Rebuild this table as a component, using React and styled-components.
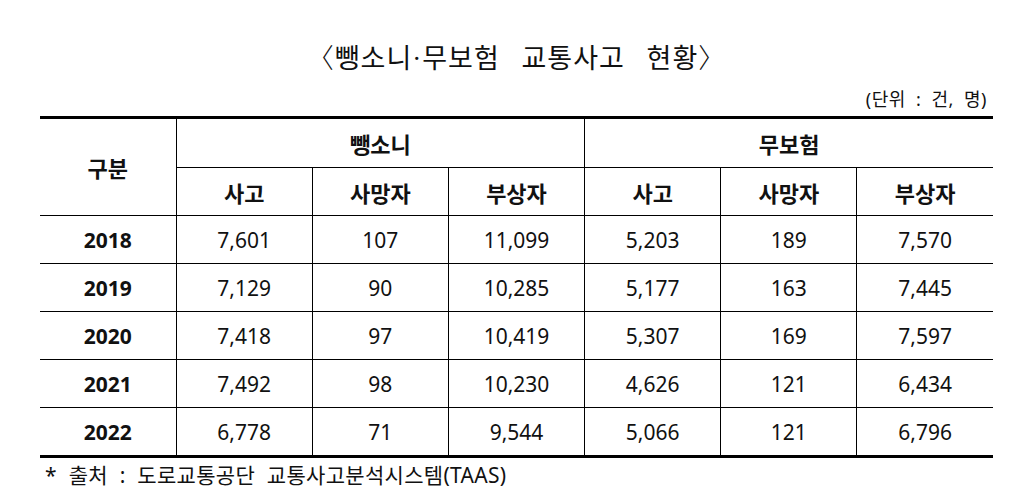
import React from "react";
import styled, { createGlobalStyle } from "styled-components";

const Global = createGlobalStyle`
  html, body { margin: 0; padding: 0; background: #fff; }
  body { font-family: "Noto Sans", "Noto Sans CJK KR", sans-serif; color: #111; }
`;

const Page = styled.div`
  width: 1033px;
  height: 501px;
  display: flex;
  flex-direction: column;
  padding: 40px 40px 0 40px;
  box-sizing: border-box;
`;

const Title = styled.h1`
  margin: 0;
  margin-left: -40px;
  margin-right: -40px;
  text-align: center;
  font-family: "Liberation Serif", "Noto Sans CJK KR", serif;
  font-weight: 400;
  font-size: 27px;
  line-height: 34px;
  letter-spacing: 1px;
  word-spacing: 14px;
`;

const Bracket = styled.span`
  font-family: "Noto Sans CJK KR", sans-serif;
  font-weight: 300;
`;

const Unit = styled.div`
  text-align: right;
  font-size: 18px;
  line-height: 22px;
  margin-top: 12px;
  padding-right: 6px;
  word-spacing: 5px;
  letter-spacing: 0.5px;
`;

const Table = styled.table`
  margin-top: 6px;
  width: 953px;
  border-collapse: collapse;
  table-layout: fixed;
  border-top: 3px solid #000;
  border-bottom: 3px solid #000;
`;

const Cell = styled.td`
  border: 1px solid #000;
  text-align: center;
  vertical-align: middle;
  padding: 0;
  height: ${(p) => p.$h || 47}px;
  font-size: ${(p) => (p.$head ? 22 : 21)}px;
  font-weight: ${(p) => (p.$bold ? 700 : 400)};
  &:first-child { border-left: none; }
  &:last-child { border-right: none; }
`;

const Footer = styled.div`
  margin-top: 4px;
  padding-left: 5px;
  font-size: 21px;
  line-height: 26px;
  word-spacing: 6px;
  letter-spacing: 0.3px;
`;

const data = [
  ["2018", "7,601", "107", "11,099", "5,203", "189", "7,570"],
  ["2019", "7,129", "90", "10,285", "5,177", "163", "7,445"],
  ["2020", "7,418", "97", "10,419", "5,307", "169", "7,597"],
  ["2021", "7,492", "98", "10,230", "4,626", "121", "6,434"],
  ["2022", "6,778", "71", "9,544", "5,066", "121", "6,796"],
];

const subs = ["사고", "사망자", "부상자", "사고", "사망자", "부상자"];

export default function App() {
  return (
    <>
      <Global />
      <Page>
        <Title>
          <Bracket>〈</Bracket>뺑소니·무보험 교통사고 현황<Bracket>〉</Bracket>
        </Title>
        <Unit>(단위 : 건, 명)</Unit>
        <Table>
          <colgroup>
            {Array.from({ length: 7 }).map((_, i) => (
              <col key={i} style={{ width: 136 }} />
            ))}
          </colgroup>
          <thead>
            <tr>
              <Cell as="th" rowSpan={2} $head $bold $h={48}>구분</Cell>
              <Cell as="th" colSpan={3} $head $bold $h={48}>뺑소니</Cell>
              <Cell as="th" colSpan={3} $head $bold $h={48}>무보험</Cell>
            </tr>
            <tr>
              {subs.map((s, i) => (
                <Cell as="th" key={i} $head $bold $h={47}>{s}</Cell>
              ))}
            </tr>
          </thead>
          <tbody>
            {data.map((row) => (
              <tr key={row[0]}>
                {row.map((v, i) => (
                  <Cell key={i} $bold={i === 0}>{v}</Cell>
                ))}
              </tr>
            ))}
          </tbody>
        </Table>
        <Footer>* 출처 : 도로교통공단 교통사고분석시스템(TAAS)</Footer>
      </Page>
    </>
  );
}
